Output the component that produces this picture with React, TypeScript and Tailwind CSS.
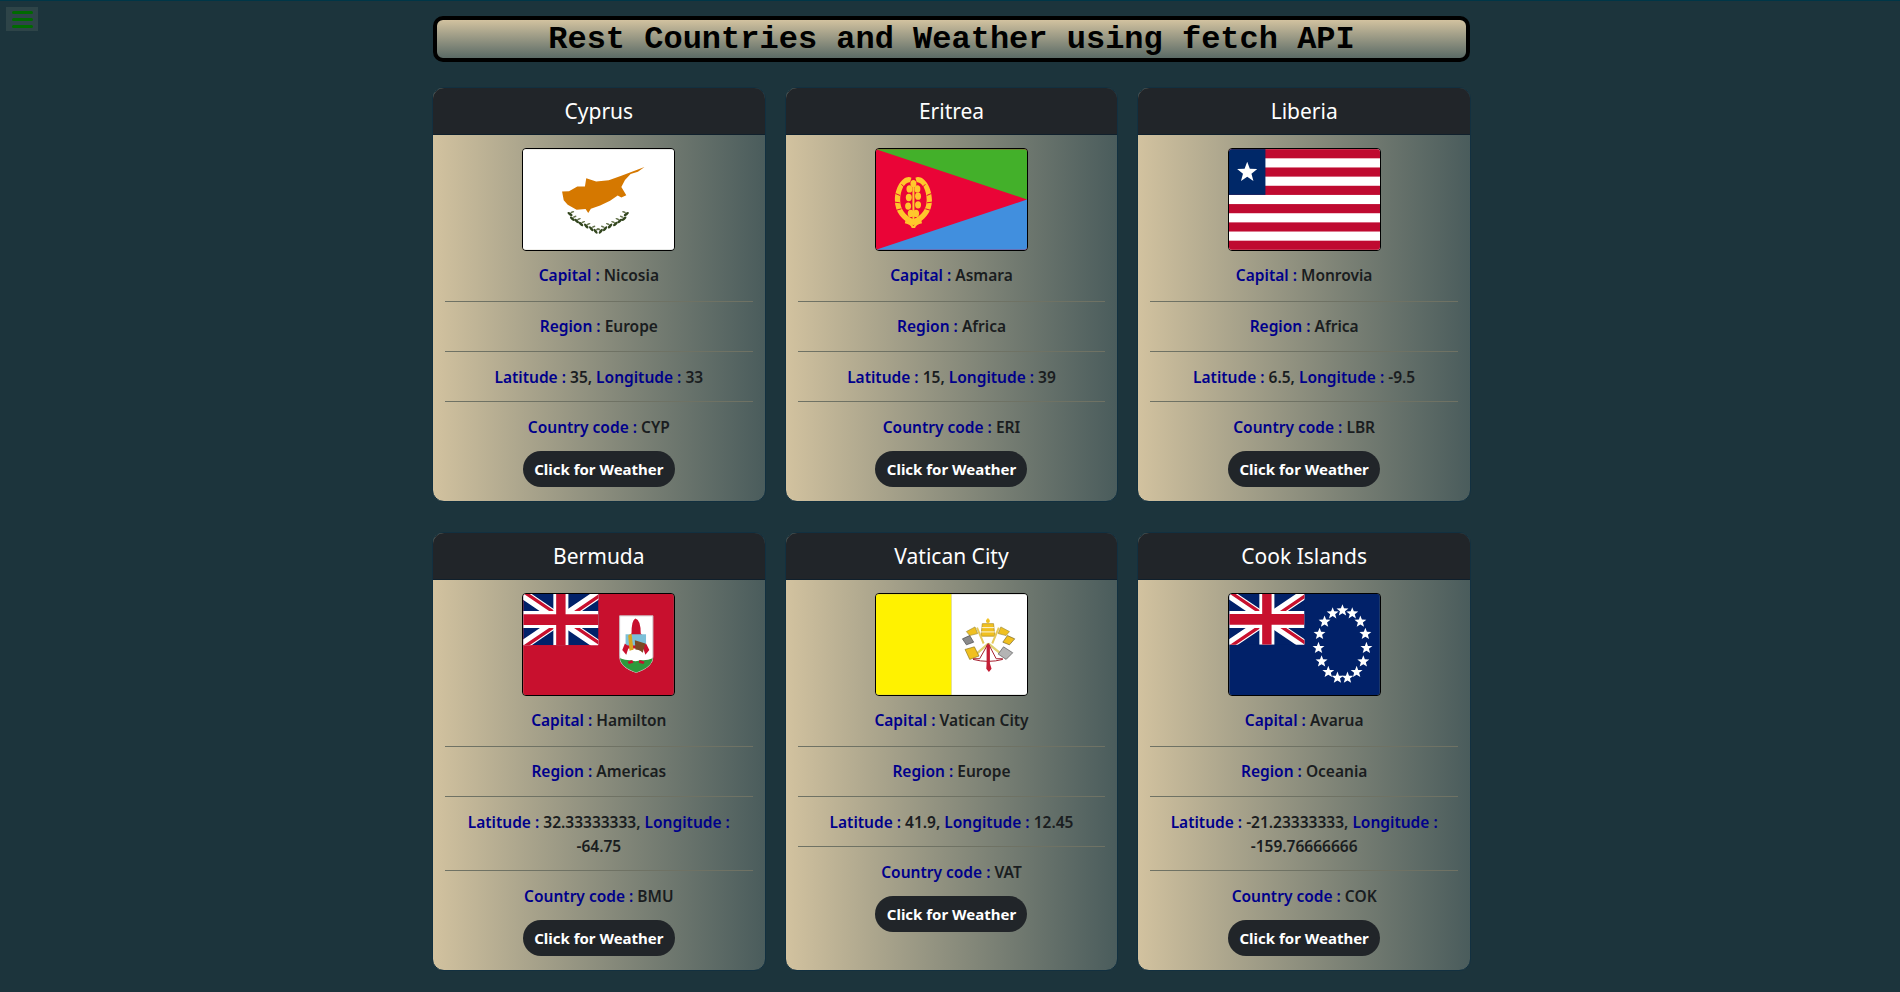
const countries = [
  { name: 'Cyprus', flag: 'cyprus', capital: 'Nicosia', region: 'Europe', lat: '35', lng: '33', code: 'CYP' },
  { name: 'Eritrea', flag: 'eritrea', capital: 'Asmara', region: 'Africa', lat: '15', lng: '39', code: 'ERI' },
  { name: 'Liberia', flag: 'liberia', capital: 'Monrovia', region: 'Africa', lat: '6.5', lng: '-9.5', code: 'LBR' },
  { name: 'Bermuda', flag: 'bermuda', capital: 'Hamilton', region: 'Americas', lat: '32.33333333', lng: '-64.75', code: 'BMU' },
  { name: 'Vatican City', flag: 'vatican', capital: 'Vatican City', region: 'Europe', lat: '41.9', lng: '12.45', code: 'VAT' },
  { name: 'Cook Islands', flag: 'cook', capital: 'Avarua', region: 'Oceania', lat: '-21.23333333', lng: '-159.76666666', code: 'COK' },
]

const starPoints = (cx: number, cy: number, r: number) => {
  const pts: string[] = []
  for (let i = 0; i < 10; i++) {
    const a = -Math.PI / 2 + (i * Math.PI) / 5
    const rad = i % 2 === 0 ? r : r * 0.42
    pts.push(`${(cx + rad * Math.cos(a)).toFixed(1)},${(cy + rad * Math.sin(a)).toFixed(1)}`)
  }
  return pts.join(' ')
}

// all flags are drawn in a 456x304 box
function UnionJack({ w, h }: { w: number; h: number }) {
  return (
    <svg x="0" y="0" width={w} height={h} viewBox="0 0 60 36" preserveAspectRatio="none">
      <rect width="60" height="36" fill="#012169" />
      <path d="M0 0L60 36M60 0L0 36" stroke="#fff" strokeWidth="7" />
      <path d="M0 0L30 18M60 36L30 18" stroke="#c8102e" strokeWidth="2.4" transform="translate(1.2 -1)" />
      <path d="M60 0L30 18M0 36L30 18" stroke="#c8102e" strokeWidth="2.4" transform="translate(1.2 1)" />
      <path d="M30 0V36M0 18H60" stroke="#fff" strokeWidth="12" />
      <path d="M30 0V36M0 18H60" stroke="#c8102e" strokeWidth="7.5" />
    </svg>
  )
}

function Flag({ kind }: { kind: string }) {
  if (kind === 'cyprus') {
    const left = [[183, 222], [190, 236], [203, 243], [216, 252], [232, 258], [247, 266], [260, 274]]
    return (
      <svg viewBox="41 26 456 304" className="block h-full w-full">
        <rect x="41" y="26" width="456" height="304" fill="#fff" />
        <path d="M408 80L388 94L366 101L349 119L338 140L353 165L338 172L327 166L304 182L274 196L246 206L238 219L230 207L203 209L176 194L164 180L159 154L180 153L205 139L228 139L232 114L262 124L300 120L338 106L370 94Z" fill="#d57800" />
        {left.map(([x, y], i) => (
          <g key={i} fill="#33461f">
            <ellipse cx={x} cy={y} rx="9" ry="4" transform={`rotate(${35 + i * 3} ${x} ${y})`} />
            <ellipse cx={x + 7} cy={y - 6} rx="6" ry="2.5" fill="#66744e" transform={`rotate(-20 ${x + 7} ${y - 6})`} />
            <ellipse cx={536 - x} cy={y} rx="9" ry="4" transform={`rotate(${-35 - i * 3} ${536 - x} ${y})`} />
            <ellipse cx={529 - x} cy={y - 6} rx="6" ry="2.5" fill="#66744e" transform={`rotate(20 ${529 - x} ${y - 6})`} />
          </g>
        ))}
      </svg>
    )
  }
  if (kind === 'eritrea') {
    return (
      <svg viewBox="47 26 456 304" className="block h-full w-full">
        <rect x="47" y="26" width="456" height="304" fill="#ea0437" />
        <polygon points="47,26 503,26 503,178" fill="#43b02a" />
        <polygon points="47,330 503,330 503,178" fill="#418fde" />
        <g transform="translate(160 180)">
          <path d="M-6 -68C-30 -78 -56 -40 -56 0C-56 36 -34 62 0 76C34 62 56 36 56 0C56 -40 30 -78 6 -68L10 -54C26 -56 40 -30 40 0C40 28 24 46 0 58C-24 46 -40 28 -40 0C-40 -30 -26 -56 -10 -54Z" fill="#ffc72c" />
          <path d="M-54 -20L-40 -14M-56 6L-41 8M-50 30L-36 26M-36 -48L-26 -38M54 -20L40 -14M56 6L41 8M50 30L36 26M36 -48L26 -38" stroke="#ea0437" strokeWidth="3" />
          <g fill="#ffc72c">
            <path d="M-24 62Q-8 66 0 78Q8 66 24 62L26 70Q8 74 5 84H-5Q-8 74 -26 70Z" />
            <rect x="-3" y="-56" width="6" height="130" />
            {[[-12, -34], [12, -34], [-14, -8], [14, -12], [-16, 18], [14, 14], [0, -50], [-8, 40], [8, 40]].map(([x, y], i) => (
              <ellipse key={i} cx={x} cy={y} rx="9" ry="11" />
            ))}
          </g>
        </g>
      </svg>
    )
  }
  if (kind === 'liberia') {
    return (
      <svg viewBox="0 0 456 304" className="block h-full w-full">
        <rect width="456" height="304" fill="#fff" />
        {[0, 2, 4, 6, 8, 10].map(i => (
          <rect key={i} y={(i * 304) / 11} width="456" height={304 / 11} fill="#bf0a30" />
        ))}
        <rect width="110" height="138" fill="#002868" />
        <polygon points={starPoints(55, 70, 32)} fill="#fff" />
      </svg>
    )
  }
  if (kind === 'bermuda') {
    return (
      <svg viewBox="0 0 456 306" className="block h-full w-full">
        <rect width="456" height="306" fill="#c8102e" />
        <UnionJack w={228} h={155} />
        <path d="M292 66H393V190Q393 222 342 238Q292 222 292 190Z" fill="#fff" stroke="#c9b9bd" strokeWidth="3" />
        <path d="M293 195Q320 205 342 198Q370 205 392 195Q390 222 342 238Q296 222 293 195Z" fill="#2e9a3c" />
        <path d="M328 120Q328 78 340 74Q356 78 356 120L368 130V165H312V130Z" fill="#c8102e" />
        <rect x="310" y="122" width="62" height="34" fill="#7cc0d8" />
        <path d="M308 150L300 170L312 184L320 160Z" fill="#c8102e" />
        <path d="M372 150L382 170L370 184L362 160Z" fill="#c8102e" />
        <path d="M318 126L328 120L334 170L322 172Z" fill="#d9a520" />
        <path d="M338 140L370 150L362 178L340 170Z" fill="#7a4a24" />
        <ellipse cx="340" cy="186" rx="24" ry="18" fill="#fff" />
        <path d="M316 205L330 200L334 208L320 212ZM352 200L368 205L364 212L350 208Z" fill="#c8102e" />
      </svg>
    )
  }
  if (kind === 'vatican') {
    return (
      <svg viewBox="47 23 456 304" className="block h-full w-full">
        <rect x="47" y="23" width="228" height="304" fill="#fff200" />
        <rect x="275" y="23" width="228" height="304" fill="#fff" />
        <path d="M368 112H402L406 150H364Z" fill="#f0c020" stroke="#a8861c" strokeWidth="2" />
        <circle cx="385" cy="104" r="6" fill="#f0c020" />
        <rect x="383" y="96" width="4" height="12" fill="#f0c020" />
        <path d="M366 124H404M364 137H406" stroke="#fff" strokeWidth="2.5" />
        <path d="M352 124L372 172M418 124L398 172" stroke="#e6c95a" strokeWidth="6" />
        <path d="M320 136L346 122L354 142L330 148Z" fill="#f0c020" stroke="#9d8a3a" strokeWidth="2" />
        <path d="M450 136L424 122L416 142L440 148Z" fill="#f0c020" stroke="#9d8a3a" strokeWidth="2" />
        <path d="M308 158L330 148L342 168L320 176Z" fill="#8a8a8a" stroke="#444" strokeWidth="2" />
        <path d="M466 158L444 148L430 168L450 176Z" fill="#f0c020" stroke="#70602a" strokeWidth="2" />
        <path d="M386 172L345 208M386 172L430 208" stroke="#e0d070" strokeWidth="7" />
        <path d="M316 190L344 182L358 210L330 220Z" fill="#f0c020" stroke="#8a7320" strokeWidth="2" />
        <path d="M460 200L432 182L416 204L440 220Z" fill="#b4b4b4" stroke="#555" strokeWidth="2" />
        <path d="M386 172L360 218H340M386 172L410 218H430M340 220Q386 232 430 220" stroke="#a31d2c" strokeWidth="3" fill="none" />
        <path d="M381 176H391V232L396 248L388 258L380 248L381 232Z" fill="#c41e35" />
      </svg>
    )
  }
  const stars = Array.from({ length: 15 }, (_, i) => {
    const a = -Math.PI / 2 + (i * 2 * Math.PI) / 15
    return [343 + 73 * Math.cos(a), 153 + 103 * Math.sin(a)]
  })
  return (
    <svg viewBox="0 0 456 306" className="block h-full w-full">
      <rect width="456" height="306" fill="#012169" />
      <UnionJack w={228} h={154} />
      {stars.map(([x, y], i) => (
        <polygon key={i} points={starPoints(x, y, 19)} fill="#fff" />
      ))}
    </svg>
  )
}

const Label = ({ children }: { children: string }) => <span className="text-[#00008b]">{children} : </span>

export default function App() {
  return (
    <div className="relative min-h-[992px] border-t border-b border-t-[#003647] border-b-[#0d1a20] bg-[#1c343c] pt-[15px] pb-[21px] font-['Noto_Sans',sans-serif]">
      <button type="button" className="absolute top-[6px] left-[6px] flex h-[24px] w-[32px] flex-col items-center justify-center gap-[4px] bg-[#2e4448]">
        <span className="h-[3px] w-[21px] rounded-full bg-[#006a00]" />
        <span className="h-[3px] w-[21px] rounded-full bg-[#006a00]" />
        <span className="h-[3px] w-[21px] rounded-full bg-[#006a00]" />
      </button>

      <div className="ml-[432px] w-[1039px]">
        <h1 className="mx-[1px] flex h-[46px] items-center justify-center rounded-[10px] border-4 border-black bg-gradient-to-b from-[#d2c29f] to-[#5b6b66] pt-[1px] font-['Liberation_Mono',monospace] text-[32px] font-bold text-black">
          Rest Countries and Weather using fetch API
        </h1>

        <div className="mt-[25px] grid grid-cols-3 gap-x-[19px] gap-y-[30px]">
          {countries.map(c => (
            <div key={c.code} className="flex flex-col overflow-hidden rounded-xl border border-[#123040] bg-gradient-to-r from-[#d2c29f] to-[#4a5c5c]">
              <div className="flex h-[47px] items-center justify-center border-b border-[#10202c] bg-[#212529] pt-[2px] text-[21px] text-white">{c.name}</div>
              <div className="flex flex-col items-center px-[12px] pt-[13px] text-center text-[15.5px] font-semibold leading-6 text-[#1a1d20]">
                <div className="h-[103px] w-[153px] overflow-hidden rounded-[4px] border border-black">
                  <Flag kind={c.flag} />
                </div>
                <p className="w-full border-b border-[#6f7264] pt-[12px] pb-[14px]"><Label>Capital</Label>{c.capital}</p>
                <p className="w-full border-b border-[#6f7264] pt-[12px] pb-[13px]"><Label>Region</Label>{c.region}</p>
                <p className="w-full border-b border-[#6f7264] pt-[13px] pb-[12px]"><Label>Latitude</Label>{c.lat}, <Label>Longitude</Label>{c.lng}</p>
                <p className="w-full pt-[13px] pb-[12px]"><Label>Country code</Label>{c.code}</p>
                <button type="button" className="mb-[14px] h-[36px] w-[152px] rounded-full bg-[#212529] text-[15px] font-bold text-white">Click for Weather</button>
              </div>
            </div>
          ))}
        </div>
      </div>
    </div>
  )
}
